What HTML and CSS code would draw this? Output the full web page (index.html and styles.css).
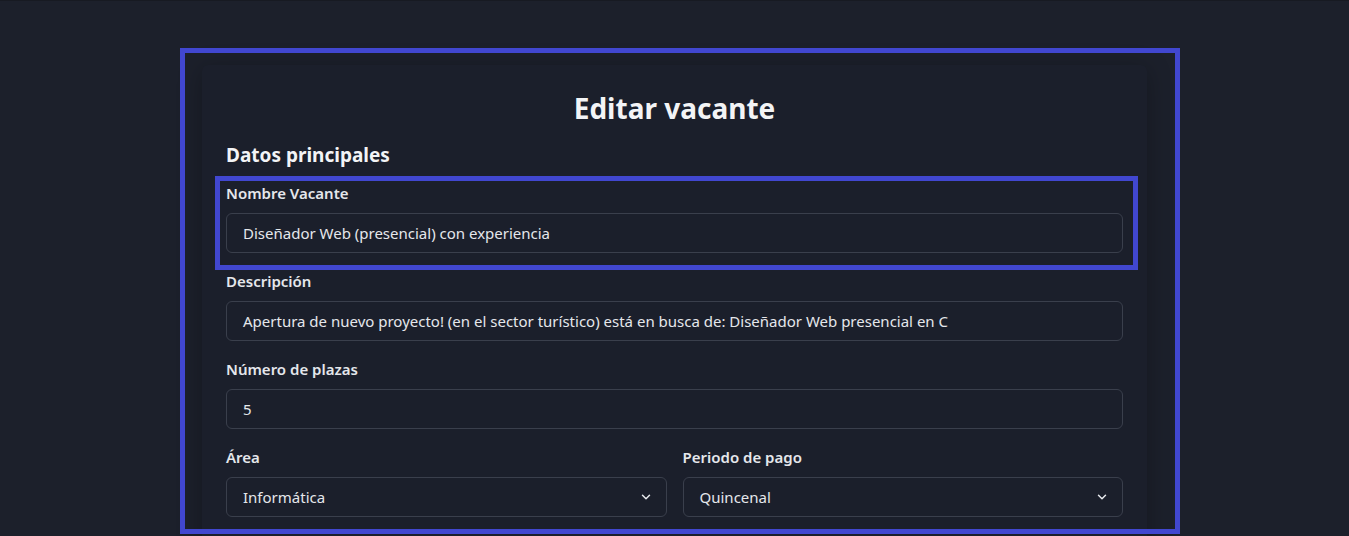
FILE: index.html
```html
<!DOCTYPE html>
<html lang="es">
<head>
<meta charset="utf-8">
<title>Editar vacante</title>
<link rel="stylesheet" href="styles.css">
</head>
<body>
<main class="page">
  <section class="card">
    <h1 class="title">Editar vacante</h1>
    <h2 class="section-title">Datos principales</h2>
    <div class="field">
      <label class="label">Nombre Vacante</label>
      <div class="input">Diseñador Web (presencial) con experiencia</div>
    </div>
    <div class="field">
      <label class="label">Descripción</label>
      <div class="input">Apertura de nuevo proyecto! (en el sector turístico) está en busca de: Diseñador Web presencial en C</div>
    </div>
    <div class="field">
      <label class="label">Número de plazas</label>
      <div class="input">5</div>
    </div>
    <div class="row">
      <div class="field">
        <label class="label">Área</label>
        <div class="input select">
          <span>Informática</span>
          <svg class="chev" width="10" height="6" viewBox="0 0 10 6"><path d="M1.5 1.2l3.5 3.5 3.5-3.5" fill="none" stroke="#e5e7eb" stroke-width="1.5" stroke-linecap="round" stroke-linejoin="round"/></svg>
        </div>
      </div>
      <div class="field">
        <label class="label">Periodo de pago</label>
        <div class="input select">
          <span>Quincenal</span>
          <svg class="chev" width="10" height="6" viewBox="0 0 10 6"><path d="M1.5 1.2l3.5 3.5 3.5-3.5" fill="none" stroke="#e5e7eb" stroke-width="1.5" stroke-linecap="round" stroke-linejoin="round"/></svg>
        </div>
      </div>
    </div>
  </section>
</main>
<div class="hl hl-outer"></div>
<div class="hl hl-inner"></div>
</body>
</html>
```

FILE: styles.css
```css
* { box-sizing: border-box; }
html, body { margin: 0; padding: 0; }
body {
  background: #1c202b;
  border-top: 1px solid #171a22;
  font-family: "Noto Sans", "Open Sans", sans-serif;
  color: #e5e7eb;
  overflow: hidden;
  height: 536px;
}
.page {
  display: block;
  padding-top: 64px;
}
.card {
  width: 945px;
  margin-left: 202px;
  background: #1b1f2b;
  border-radius: 6px;
  box-shadow: 0 4px 24px rgba(0, 0, 0, 0.28);
  padding: 25px 24px 60px;
}
.title {
  margin: 0;
  text-align: center;
  font-size: 28px;
  line-height: 36px;
  font-weight: 700;
  color: #f3f4f6;
}
.section-title {
  margin: 15px 0 12px;
  font-size: 19px;
  line-height: 28px;
  font-weight: 700;
  color: #f3f4f6;
}
.field { margin-bottom: 16px; }
.label {
  display: block;
  font-size: 15px;
  line-height: 24px;
  font-weight: 600;
  color: #e5e7eb;
  margin-bottom: 8px;
}
.input {
  height: 40px;
  border: 1px solid #3a3f4c;
  border-radius: 6px;
  padding: 0 16px;
  display: flex;
  align-items: center;
  font-size: 15px;
  color: #e5e7eb;
  white-space: nowrap;
  overflow: hidden;
}
.select { justify-content: space-between; padding-right: 15px; }
.row {
  display: grid;
  grid-template-columns: 1fr 1fr;
  gap: 16px;
}
.hl {
  position: absolute;
  border: 5px solid #4147d0;
  pointer-events: none;
}
.hl-outer { left: 180px; top: 48px; width: 1000px; height: 486px; }
.hl-inner { left: 215px; top: 176px; width: 923px; height: 94px; }
```
